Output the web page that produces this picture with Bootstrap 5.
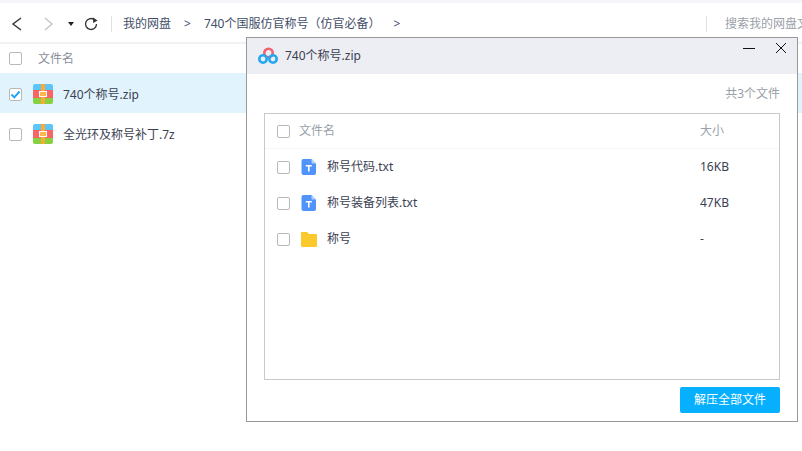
<!DOCTYPE html>
<html lang="zh-CN">
<head>
<meta charset="utf-8">
<title>740个称号.zip</title>
<link rel="stylesheet" href="https://cdn.jsdelivr.net/npm/bootstrap@5.3.0/dist/css/bootstrap.min.css">
<style>
html,body{height:451px;overflow:hidden;background:#fff}
body{font-family:"Noto Sans","Noto Sans CJK SC",sans-serif;font-size:12px;color:#424e67;position:relative;line-height:16px}
.top-strip{height:3px;background:#f5f6fa}
.tool-bar{height:41px;border-bottom:2px solid #f1f2f4;padding-top:3px}
.nav-ico{width:16px;height:16px;flex:none}
.back-ico{margin-left:8px}
.fwd-ico{margin-left:16px}
.drop-caret{margin-left:12px;width:0;height:0;border-left:3px solid transparent;border-right:3px solid transparent;border-top:4px solid #222}
.refresh-ico{margin-left:9px}
.crumbs{margin-left:12px;padding-left:11px;border-left:1px solid #dfe1e5;height:16px;color:#424e67;white-space:nowrap}
.crumb-arrow{margin:0 13px}
.search-hint{position:absolute;left:706px;top:16px;border-left:1px solid #dfe1e5;height:16px;padding-left:18px;color:#9a9fa9;white-space:nowrap;width:96px;overflow:hidden}
.file-head{height:29px;color:#8a8f99;padding-left:9px}
.file-row{height:40px;padding-left:9px;padding-top:2px;color:#3b4152}
.file-row.picked{background:#e1f3fd}
.file-row .tick{margin-top:1px}
.row-label{padding-top:2px}
.tick{width:13px;height:13px;flex:none;border:1px solid #b8b8b8;border-radius:2px;background:#fff;display:flex;align-items:center;justify-content:center}
.head-name{margin-left:16px}
.zip-ico{width:20px;height:20px;flex:none;margin-left:11px;margin-right:10px}
.dlg{position:absolute;left:246px;top:37px;width:552px;height:385px;background:#fff;border:1px solid #999}
.dlg-title{height:36px;background:#edeef3;padding-left:11px;color:#3b4152;font-size:12px}
.dlg-logo{width:20px;height:18px;margin-right:7px}
.win-btn{position:absolute;top:3px;width:14px;height:14px}
.min-btn{left:495px}
.close-btn{left:527px}
.count-line{height:39px;padding-right:17px;color:#9a9fa9}
.inner-box{margin:0 17px;height:267px;border:1px solid #c9c9c9}
.box-head{height:35px;border-bottom:1px solid #f5f5f5;padding-left:12px;color:#9a9fa9}
.box-row{height:36px;padding-left:12px;color:#3b4152}
.col-name{flex:1}
.col-size{width:79px}
.doc-ico{width:16px;height:16px;margin-left:11px;margin-right:10px;flex:none}
.box-head .col-name{margin-left:9px}
.dlg-foot{padding:7px 17px 0 0}
.extract-btn{width:100px;height:26px;background:#06b0ff;border:0;border-radius:2px;color:#fff;font-size:12px;padding:0;line-height:26px}
.extract-btn:hover{background:#06b0ff;color:#fff}
</style>
</head>
<body>
<div class="top-strip"></div>
<div class="tool-bar d-flex align-items-center">
  <svg class="nav-ico back-ico" viewBox="0 0 16 16"><path d="M13 2 L5 8 L13 14" fill="none" stroke="#333" stroke-width="1.4"/></svg>
  <svg class="nav-ico fwd-ico" viewBox="0 0 16 16"><path d="M5 2 L12 8 L5 14" fill="none" stroke="#c4c4c4" stroke-width="1.4"/></svg>
  <span class="drop-caret"></span>
  <svg class="nav-ico refresh-ico" viewBox="0 0 16 16"><path d="M13.5 8 A5.5 5.5 0 1 1 11 3.4" fill="none" stroke="#333" stroke-width="1.3"/><path d="M10 1.6 L14.6 4.6 L10.2 7 Z" fill="#333"/></svg>
  <div class="crumbs d-flex align-items-center"><span>我的网盘</span><span class="crumb-arrow">&gt;</span><span>740个国服仿官称号（仿官必备）</span><span class="crumb-arrow">&gt;</span></div>
</div>
<div class="search-hint">搜索我的网盘文件</div>
<div class="file-head d-flex align-items-center"><span class="tick"></span><span class="head-name">文件名</span></div>
<div class="file-row picked d-flex align-items-center">
  <span class="tick"><svg width="11" height="11" viewBox="0 0 11 11"><path d="M1.5 5.5 L4.3 8.3 L9.5 2.5" fill="none" stroke="#1ea4f5" stroke-width="1.9"/></svg></span>
  <svg class="zip-ico" viewBox="0 0 20 20"><use href="#zipshape"/></svg>
  <span class="row-label">740个称号.zip</span>
</div>
<div class="file-row d-flex align-items-center">
  <span class="tick"></span>
  <svg class="zip-ico" viewBox="0 0 20 20"><use href="#zipshape"/></svg>
  <span class="row-label">全光环及称号补丁.7z</span>
</div>

<svg width="0" height="0" class="d-block"><defs>
  <g id="zipshape"><path d="M2 0H18a2 2 0 0 1 2 2V6H0V2a2 2 0 0 1 2-2Z" fill="#5cc6f9"/><rect y="6" width="20" height="8" fill="#fa6464"/><path d="M0 14H20V18a2 2 0 0 1-2 2H2a2 2 0 0 1-2-2Z" fill="#85d13f"/><rect x="8" width="4" height="20" fill="#fbaa35"/><rect x="6.5" y="7.5" width="7" height="5" fill="#fbb84f" stroke="#fff" stroke-width="1"/></g>
  <g id="txtshape"><path d="M2.5 0H10.5L15 4.5V14a2 2 0 0 1-2 2H2.5a2 2 0 0 1-2-2V2a2 2 0 0 1 2-2Z" fill="#4f93fb"/><path d="M10.5 0L15 4.5H11.5a1 1 0 0 1-1-1Z" fill="#b5d2fd"/><path d="M4.8 6H10.8V7.5H8.6V12.5H7V7.5H4.8Z" fill="#fff"/></g>
</defs></svg>

<div class="dlg">
  <div class="dlg-title d-flex align-items-center">
    <svg class="dlg-logo" viewBox="0 0 20 18"><circle cx="10.5" cy="6" r="4.2" fill="none" stroke="#f0616f" stroke-width="2.6"/><circle cx="5" cy="12" r="3.7" fill="none" stroke="#23a8f2" stroke-width="2.6"/><circle cx="15" cy="12" r="3.7" fill="none" stroke="#23a8f2" stroke-width="2.6"/></svg>
    <span>740个称号.zip</span>
  </div>
  <svg class="win-btn min-btn" viewBox="0 0 14 14"><path d="M1 7.5H13" stroke="#111" stroke-width="1"/></svg>
  <svg class="win-btn close-btn" viewBox="0 0 14 14"><path d="M2 2L12 12M12 2L2 12" stroke="#111" stroke-width="1"/></svg>
  <div class="count-line d-flex align-items-center justify-content-end">共3个文件</div>
  <div class="inner-box">
    <div class="box-head d-flex align-items-center"><span class="tick"></span><span class="col-name">文件名</span><span class="col-size">大小</span></div>
    <div class="box-row d-flex align-items-center"><span class="tick"></span><svg class="doc-ico" viewBox="0 0 16 16"><use href="#txtshape"/></svg><span class="col-name">称号代码.txt</span><span class="col-size">16KB</span></div>
    <div class="box-row d-flex align-items-center"><span class="tick"></span><svg class="doc-ico" viewBox="0 0 16 16"><use href="#txtshape"/></svg><span class="col-name">称号装备列表.txt</span><span class="col-size">47KB</span></div>
    <div class="box-row d-flex align-items-center"><span class="tick"></span><svg class="doc-ico" viewBox="0 0 16 16"><path d="M0 2a1 1 0 0 1 1-1H6L8 3H15a1 1 0 0 1 1 1V15a1 1 0 0 1-1 1H1a1 1 0 0 1-1-1Z" fill="#fbc92c"/></svg><span class="col-name">称号</span><span class="col-size">-</span></div>
  </div>
  <div class="dlg-foot d-flex justify-content-end"><button type="button" class="btn extract-btn">解压全部文件</button></div>
</div>
<script src="https://cdn.jsdelivr.net/npm/bootstrap@5.3.0/dist/js/bootstrap.bundle.min.js"></script>
</body>
</html>
